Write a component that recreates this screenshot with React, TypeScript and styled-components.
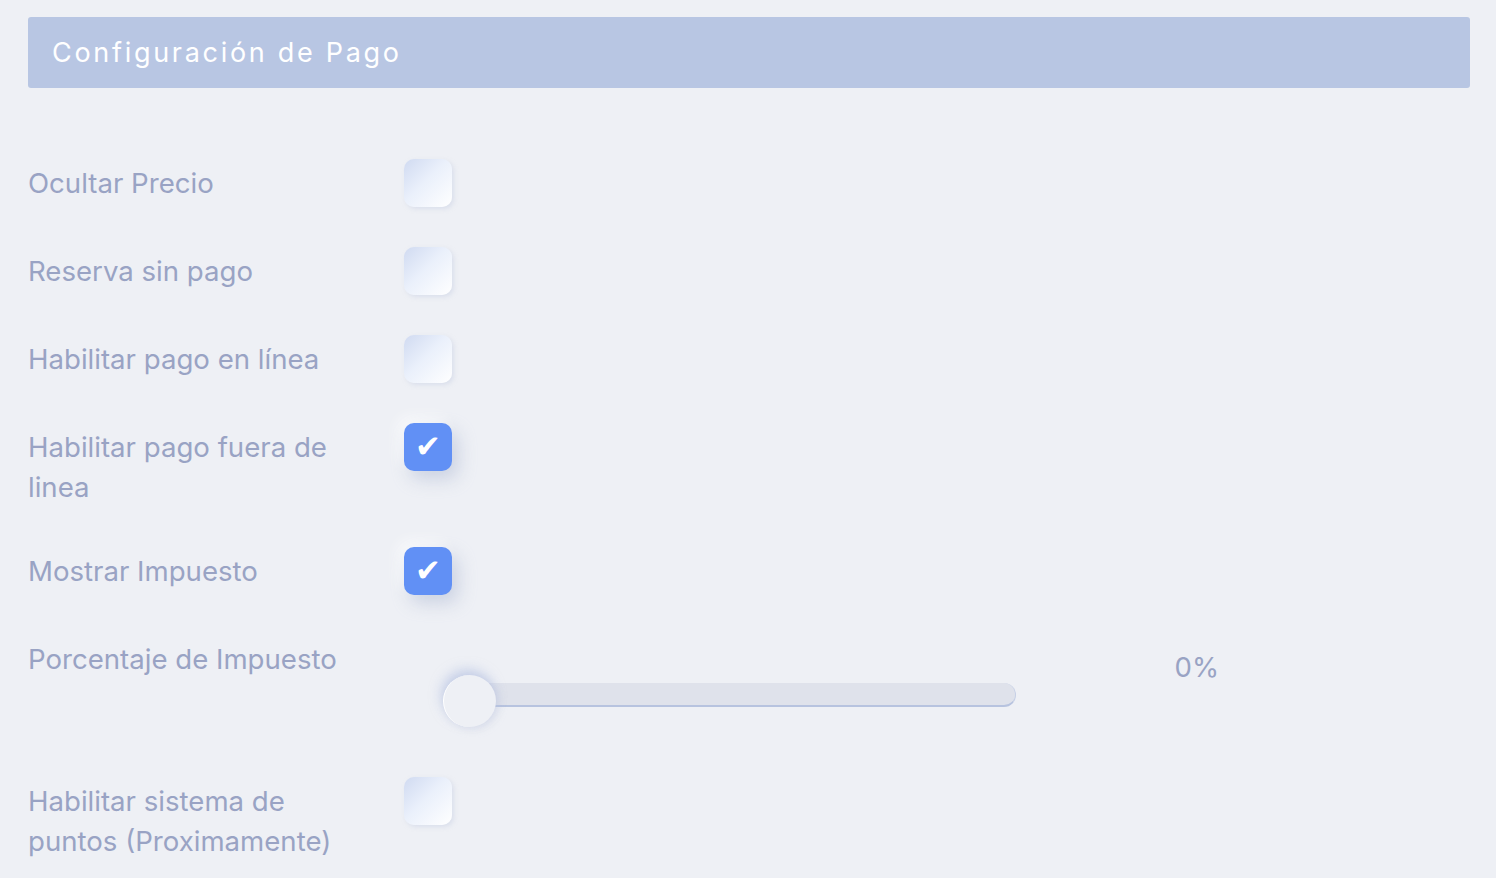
import React, { useState } from 'react'
import styled, { createGlobalStyle, css } from 'styled-components'

const GlobalStyle = createGlobalStyle`
    * { box-sizing: border-box; }
    html, body {
        margin: 0;
        padding: 0;
        background: #eef0f5;
        font-family: Inter, "Noto Sans", sans-serif;
    }
`;

const Page = styled.div`
    padding: 17px 26px 40px 28px;
    min-height: 878px;
    background: #eef0f5;
`;

const Header = styled.div`
    height: 71px;
    background: #b8c6e3;
    border-radius: 3px;
    display: flex;
    align-items: center;
    padding: 0 24px;
    color: #ffffff;
    font-size: 27px;
    letter-spacing: 2.7px;
    font-weight: 400;
`;

const Form = styled.div`
    display: flex;
    flex-direction: column;
    gap: 40px;
    margin-top: 71px;
`;

const Row = styled.div`
    display: flex;
    align-items: flex-start;
`;

const Label = styled.div`
    width: 376px;
    padding: 4px 40px 0 0;
    font-size: 27.6px;
    line-height: 40px;
    color: #99a3c4;
`;

const Box: any = styled.button`
    width: 48px;
    height: 48px;
    border: none;
    border-radius: 10px;
    padding: 0 0 2px 0;
    flex-shrink: 0;
    display: flex;
    align-items: center;
    justify-content: center;
    cursor: pointer;
    color: #ffffff;
    font-family: "DejaVu Sans", sans-serif;
    font-size: 31px;
    line-height: 1;
    ${({ $checked }: any) => $checked ? css`
    background: #6190f5;
    box-shadow: 6px 8px 18px rgba(160, 172, 205, 0.45), -6px -6px 14px rgba(255, 255, 255, 0.7);` : css`
    background: linear-gradient(135deg, #d0daf1 0%, #eaf0fb 45%, #ffffff 100%);
    box-shadow: 2px 2px 4px rgba(200, 208, 228, 0.5);`}
`;

const Checkbox = ({ checked, onToggle }: { checked: boolean, onToggle: () => void }) => (
    <Box $checked={checked} onClick={onToggle}>{checked && '✔'}</Box>
);

const SliderCol = styled.div`
    width: 840px;
    display: flex;
    flex-direction: column;
`;

const SliderValue = styled.div`
    align-self: flex-end;
    font-size: 27.6px;
    line-height: 40px;
    color: #99a3c4;
    margin-top: 12px;
    padding-right: 25px;
    margin-bottom: -4px;
`;

const SliderTrack = styled.div`
    position: relative;
    margin: 0 0 30px 66px;
    width: 546px;
    height: 24px;
    border-radius: 12px;
    background: #dfe2eb;
    border-bottom: 2px solid #b7c3df;
    border-right: 1px solid #c6d0e6;
`;

const Thumb = styled.div`
    position: absolute;
    left: -27px;
    top: -8px;
    width: 53px;
    height: 52px;
    border-radius: 50%;
    background: #eef0f5;
    border-left: 1px solid #ffffff;
    box-shadow: -2px -6px 12px rgba(170, 184, 222, 0.55), 3px 2px 8px rgba(190, 198, 222, 0.4);
`;

const rows = [
    { key: 'hide', label: 'Ocultar Precio' },
    { key: 'nopay', label: 'Reserva sin pago' },
    { key: 'online', label: 'Habilitar pago en línea' },
    { key: 'offline', label: 'Habilitar pago fuera de linea' },
    { key: 'tax', label: 'Mostrar Impuesto' },
];

const App = () => {
    const [values, setValues] = useState<Record<string, boolean>>({
        hide: false, nopay: false, online: false, offline: true, tax: true, points: false,
    });
    const toggle = (k: string) => setValues(prev => ({ ...prev, [k]: !prev[k] }));
    return <>
        <GlobalStyle />
        <Page>
            <Header>Configuración de Pago</Header>
            <Form>
                {rows.map(r => (
                    <Row key={r.key}>
                        <Label>{r.label}</Label>
                        <Checkbox checked={values[r.key]} onToggle={() => toggle(r.key)} />
                    </Row>
                ))}
                <Row>
                    <Label>Porcentaje de Impuesto</Label>
                    <SliderCol>
                        <SliderValue>0%</SliderValue>
                        <SliderTrack><Thumb /></SliderTrack>
                    </SliderCol>
                </Row>
                <Row>
                    <Label>Habilitar sistema de puntos (Proximamente)</Label>
                    <Checkbox checked={values.points} onToggle={() => toggle('points')} />
                </Row>
            </Form>
        </Page>
    </>
}

export default App;
